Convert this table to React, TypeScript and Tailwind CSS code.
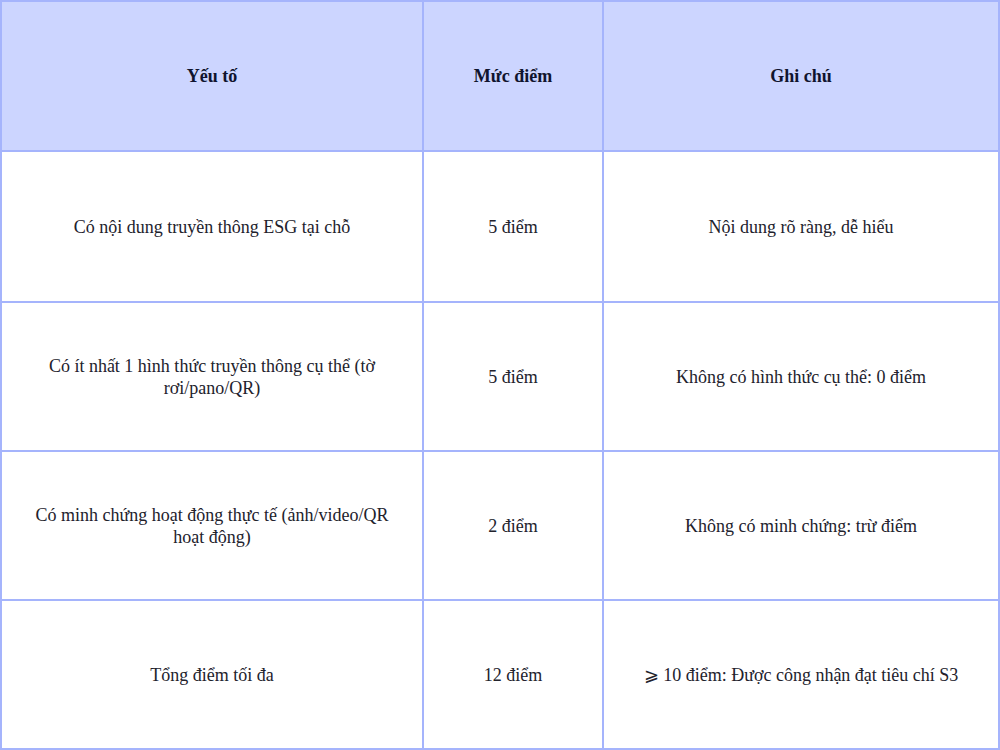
import React from 'react';

const rows: [string, string, string][] = [
    ['Có nội dung truyền thông ESG tại chỗ', '5 điểm', 'Nội dung rõ ràng, dễ hiểu'],
    ['Có ít nhất 1 hình thức truyền thông cụ thể (tờ rơi/pano/QR)', '5 điểm', 'Không có hình thức cụ thể: 0 điểm'],
    ['Có minh chứng hoạt động thực tế (ảnh/video/QR hoạt động)', '2 điểm', 'Không có minh chứng: trừ điểm'],
    ['Tổng điểm tối đa', '12 điểm', '⩾ 10 điểm: Được công nhận đạt tiêu chí S3'],
];

const cell = 'flex items-center justify-center text-center border-r-2 border-b-2 border-[#a5b4fc] px-6';

export default function App() {
    return (
        <div className="w-[1000px] h-[750px] bg-white font-['Liberation_Serif','DejaVu_Serif',serif] text-[18px] leading-[22px] text-[#22222c]">
            <div className="grid grid-cols-[422px_180px_396px] grid-rows-[150px_151px_149px_149px_149px] border-l-2 border-t-2 border-[#a5b4fc]">
                {['Yếu tố', 'Mức điểm', 'Ghi chú'].map((h) => (
                    <div key={h} className={`${cell} bg-[#ccd5ff] font-bold text-[#10142e]`}>
                        {h}
                    </div>
                ))}
                {rows.map((r, i) => (
                    <React.Fragment key={i}>
                        <div className={cell}>{r[0]}</div>
                        <div className={cell}>{r[1]}</div>
                        <div className={cell}>{r[2]}</div>
                    </React.Fragment>
                ))}
            </div>
        </div>
    );
}
